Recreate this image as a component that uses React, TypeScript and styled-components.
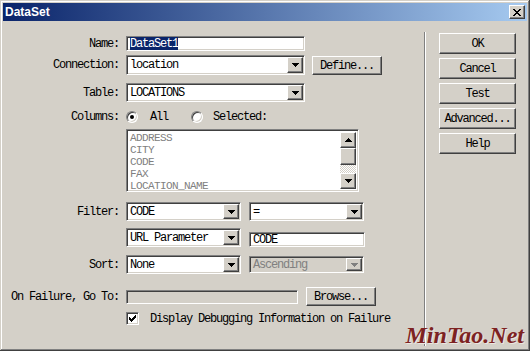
import React from "react";
import styled, { createGlobalStyle, css } from "styled-components";

const Global = createGlobalStyle`
  html, body { margin: 0; padding: 0; background: #d4d0c8; }
  body { width: 530px; height: 351px; overflow: hidden; }
  * { box-sizing: border-box; }
`;

const mono = css`
  font-family: "Liberation Mono", "DejaVu Sans Mono", monospace;
  font-size: 12px;
  letter-spacing: -1.2px;
  line-height: 12px;
  color: #000;
`;

const sunken = css`
  border: 1px solid;
  border-color: #808080 #ffffff #ffffff #808080;
  box-shadow: inset 1px 1px #404040, inset -1px -1px #d4d0c8;
`;

const raised = css`
  border: 1px solid;
  border-color: #ffffff #404040 #404040 #ffffff;
  box-shadow: inset -1px -1px #808080, inset 1px 1px #d4d0c8;
`;

const Window = styled.div`
  position: relative;
  width: 530px;
  height: 351px;
  padding: 3px;
  background: #d4d0c8;
  box-shadow: inset -1px -1px #404040, inset 1px 1px #d4d0c8,
    inset -2px -2px #808080, inset 2px 2px #ffffff;
  display: flex;
  flex-direction: column;
`;

const TitleBar = styled.div`
  height: 18px;
  flex-shrink: 0;
  background: linear-gradient(to right, #0a246a, #a6caf0);
  display: flex;
  align-items: center;
  justify-content: space-between;
  padding: 0 2px 0 2px;
`;

const Title = styled.span`
  font-family: "Liberation Sans", Arial, sans-serif;
  font-weight: bold;
  font-size: 12px;
  color: #ffffff;
`;

const CloseBtn = styled.div`
  ${raised};
  width: 16px;
  height: 14px;
  background: #d4d0c8;
  display: flex;
  align-items: center;
  justify-content: center;
`;

const Body = styled.div`
  flex: 1;
  display: flex;
`;

const Form = styled.div`
  width: 421px;
  flex-shrink: 0;
  display: flex;
  flex-direction: column;
  padding-top: 15px;
`;

const Row = styled.div<{ $h: number; $mt: number; $align?: string }>`
  display: flex;
  align-items: ${(p) => p.$align || "center"};
  height: ${(p) => p.$h}px;
  margin-top: ${(p) => p.$mt}px;
`;

const Label = styled.div`
  ${mono};
  width: 116px;
  margin-right: 7px;
  flex-shrink: 0;
  text-align: right;
  white-space: nowrap;
  align-self: center;
`;

const Field = styled.div<{ $w: number; $h: number; $disabled?: boolean; $ml?: number }>`
  ${sunken};
  ${mono};
  width: ${(p) => p.$w}px;
  height: ${(p) => p.$h}px;
  margin-left: ${(p) => p.$ml || 0}px;
  background: ${(p) => (p.$disabled ? "#d4d0c8" : "#ffffff")};
  color: ${(p) => (p.$disabled ? "#808080" : "#000")};
  padding: 1px 1px 1px 2px;
  display: flex;
  align-items: center;
  flex-shrink: 0;
  white-space: nowrap;
  overflow: hidden;
`;

const FieldText = styled.span`
  flex: 1;
  padding-left: 1px;
`;

const Selected = styled.span`
  background: #0a246a;
  color: #ffffff;
  padding: 1px 0;
`;

const DropBtn = styled.div`
  ${raised};
  width: 16px;
  height: 100%;
  background: #d4d0c8;
  display: flex;
  align-items: center;
  justify-content: center;
  flex-shrink: 0;
`;

const Button = styled.div<{ $w: number; $h: number; $ml?: number }>`
  ${raised};
  ${mono};
  width: ${(p) => p.$w}px;
  height: ${(p) => p.$h}px;
  margin-left: ${(p) => p.$ml || 0}px;
  background: #d4d0c8;
  display: flex;
  align-items: center;
  justify-content: center;
  flex-shrink: 0;
`;

const RadioGroup = styled.div`
  display: flex;
  align-items: center;
`;

const Radio = styled.div<{ $checked?: boolean; $ml?: number }>`
  width: 12px;
  height: 12px;
  border-radius: 50%;
  background: #ffffff;
  margin-left: ${(p) => p.$ml || 0}px;
  border: 1px solid;
  border-color: #808080 #ffffff #ffffff #808080;
  box-shadow: inset 1px 1px #404040, inset -1px -1px #d4d0c8;
  position: relative;
  flex-shrink: 0;
  &::after {
    content: "";
    display: ${(p) => (p.$checked ? "block" : "none")};
    position: absolute;
    width: 4px;
    height: 4px;
    border-radius: 50%;
    background: #000;
    left: 3px;
    top: 3px;
  }
`;

const OptText = styled.span<{ $ml: number }>`
  ${mono};
  margin-left: ${(p) => p.$ml}px;
`;

const ListBox = styled.div`
  ${sunken};
  width: 233px;
  height: 63px;
  background: #ffffff;
  padding: 2px;
  display: flex;
`;

const ListItems = styled.div`
  flex: 1;
  padding-left: 1px;
  display: flex;
  flex-direction: column;
`;

const ListItem = styled.div`
  ${mono};
  font-size: 11px;
  letter-spacing: -0.6px;
  line-height: 12px;
  color: #808080;
  height: 12px;
`;

const ScrollBar = styled.div`
  width: 16px;
  display: flex;
  flex-direction: column;
`;

const ScrollBtn = styled.div<{ $h: number }>`
  ${raised};
  height: ${(p) => p.$h}px;
  background: #d4d0c8;
  display: flex;
  align-items: center;
  justify-content: center;
  flex-shrink: 0;
`;

const Track = styled.div`
  flex: 1;
  background: repeating-conic-gradient(#d4d0c8 0 25%, #ffffff 0 50%) 0 0 / 2px 2px;
`;

const Check = styled.div`
  ${sunken};
  width: 13px;
  height: 13px;
  background: #ffffff;
  display: flex;
  align-items: center;
  justify-content: center;
  flex-shrink: 0;
`;

const Separator = styled.div`
  width: 2px;
  margin: 11px 0 2px 0;
  border-left: 1px solid #808080;
  border-right: 1px solid #ffffff;
  flex-shrink: 0;
`;

const ButtonCol = styled.div`
  display: flex;
  flex-direction: column;
  gap: 4px;
  padding: 12px 0 0 13px;
`;

const Watermark = styled.div`
  position: absolute;
  right: 6px;
  bottom: 4px;
  font-family: "Liberation Serif", "Times New Roman", serif;
  font-style: italic;
  font-weight: bold;
  font-size: 24px;
  line-height: 24px;
  color: #7d2222;
  text-shadow: 1px 1px 0 #ece8e0;
`;

const Arrow = ({ dir = "down", color = "#000" }: { dir?: "up" | "down"; color?: string }) => (
  <svg width="7" height="4" viewBox="0 0 7 4" shapeRendering="crispEdges">
    {dir === "down" ? (
      <path d="M0 0h7v1H0zM1 1h5v1H1zM2 2h3v1H2zM3 3h1v1H3z" fill={color} />
    ) : (
      <path d="M3 0h1v1H3zM2 1h3v1H2zM1 2h5v1H1zM0 3h7v1H0z" fill={color} />
    )}
  </svg>
);

const Select = ({
  w,
  h,
  text,
  disabled,
}: {
  w: number;
  h: number;
  text: string;
  disabled?: boolean;
}) => (
  <Field $w={w} $h={h} $disabled={disabled}>
    <FieldText>{text}</FieldText>
    <DropBtn>
      <Arrow color={disabled ? "#808080" : "#000"} />
    </DropBtn>
  </Field>
);

export default function App() {
  return (
    <>
      <Global />
      <Window>
        <TitleBar>
          <Title>DataSet</Title>
          <CloseBtn>
            <svg width="8" height="7" viewBox="0 0 8 7" shapeRendering="crispEdges">
              <path
                d="M0 0h2v1H0zM6 0h2v1H6zM1 1h2v1H1zM5 1h2v1H5zM2 2h4v1H2zM3 3h2v1H3zM2 4h4v1H2zM1 5h2v1H1zM5 5h2v1H5zM0 6h2v1H0zM6 6h2v1H6z"
                fill="#000"
              />
            </svg>
          </CloseBtn>
        </TitleBar>
        <Body>
          <Form>
            <Row $h={15} $mt={0}>
              <Label>Name:</Label>
              <Field $w={179} $h={15}>
                <FieldText>
                  <Selected>DataSet1</Selected>
                </FieldText>
              </Field>
            </Row>
            <Row $h={20} $mt={4} $align="flex-end">
              <Label>Connection:</Label>
              <Select w={179} h={20} text="location" />
              <Button $w={70} $h={19} $ml={7}>
                Define...
              </Button>
            </Row>
            <Row $h={19} $mt={8}>
              <Label>Table:</Label>
              <Select w={179} h={19} text="LOCATIONS" />
            </Row>
            <Row $h={12} $mt={9}>
              <Label>Columns:</Label>
              <RadioGroup>
                <Radio $checked />
                <OptText $ml={12}>All</OptText>
                <Radio $ml={23} />
                <OptText $ml={10}>Selected:</OptText>
              </RadioGroup>
            </Row>
            <Row $h={63} $mt={6}>
              <Label />
              <ListBox>
                <ListItems>
                  <ListItem>ADDRESS</ListItem>
                  <ListItem>CITY</ListItem>
                  <ListItem>CODE</ListItem>
                  <ListItem>FAX</ListItem>
                  <ListItem>LOCATION_NAME</ListItem>
                </ListItems>
                <ScrollBar>
                  <ScrollBtn $h={16}>
                    <Arrow dir="up" />
                  </ScrollBtn>
                  <ScrollBtn $h={17} />
                  <Track />
                  <ScrollBtn $h={16}>
                    <Arrow />
                  </ScrollBtn>
                </ScrollBar>
              </ListBox>
            </Row>
            <Row $h={19} $mt={10}>
              <Label>Filter:</Label>
              <Select w={115} h={19} text="CODE" />
              <Field $w={115} $h={19} $ml={8}>
                <FieldText>=</FieldText>
                <DropBtn>
                  <Arrow />
                </DropBtn>
              </Field>
            </Row>
            <Row $h={19} $mt={7} $align="flex-end">
              <Label />
              <Select w={115} h={19} text="URL Parameter" />
              <Field $w={116} $h={15} $ml={8}>
                <FieldText>CODE</FieldText>
              </Field>
            </Row>
            <Row $h={19} $mt={8}>
              <Label>Sort:</Label>
              <Select w={115} h={19} text="None" />
              <Field $w={115} $h={17} $ml={8} $disabled>
                <FieldText>Ascending</FieldText>
                <DropBtn>
                  <Arrow color="#808080" />
                </DropBtn>
              </Field>
            </Row>
            <Row $h={19} $mt={13}>
              <Label>On Failure, Go To:</Label>
              <Field $w={172} $h={14} $disabled />
              <Button $w={70} $h={19} $ml={8}>
                Browse...
              </Button>
            </Row>
            <Row $h={13} $mt={6}>
              <Label />
              <Check>
                <svg width="7" height="7" viewBox="0 0 7 7" shapeRendering="crispEdges">
                  <path
                    d="M6 0h1v3H6zM5 1h1v3H5zM4 2h1v3H4zM3 3h1v3H3zM2 4h1v3H2zM1 3h1v3H1zM0 2h1v3H0z"
                    fill="#000"
                  />
                </svg>
              </Check>
              <OptText $ml={11}>Display Debugging Information on Failure</OptText>
            </Row>
          </Form>
          <Separator />
          <ButtonCol>
            <Button $w={77} $h={21}>OK</Button>
            <Button $w={77} $h={21}>Cancel</Button>
            <Button $w={77} $h={21}>Test</Button>
            <Button $w={77} $h={21}>Advanced...</Button>
            <Button $w={77} $h={21}>Help</Button>
          </ButtonCol>
        </Body>
        <Watermark>MinTao.Net</Watermark>
      </Window>
    </>
  );
}
